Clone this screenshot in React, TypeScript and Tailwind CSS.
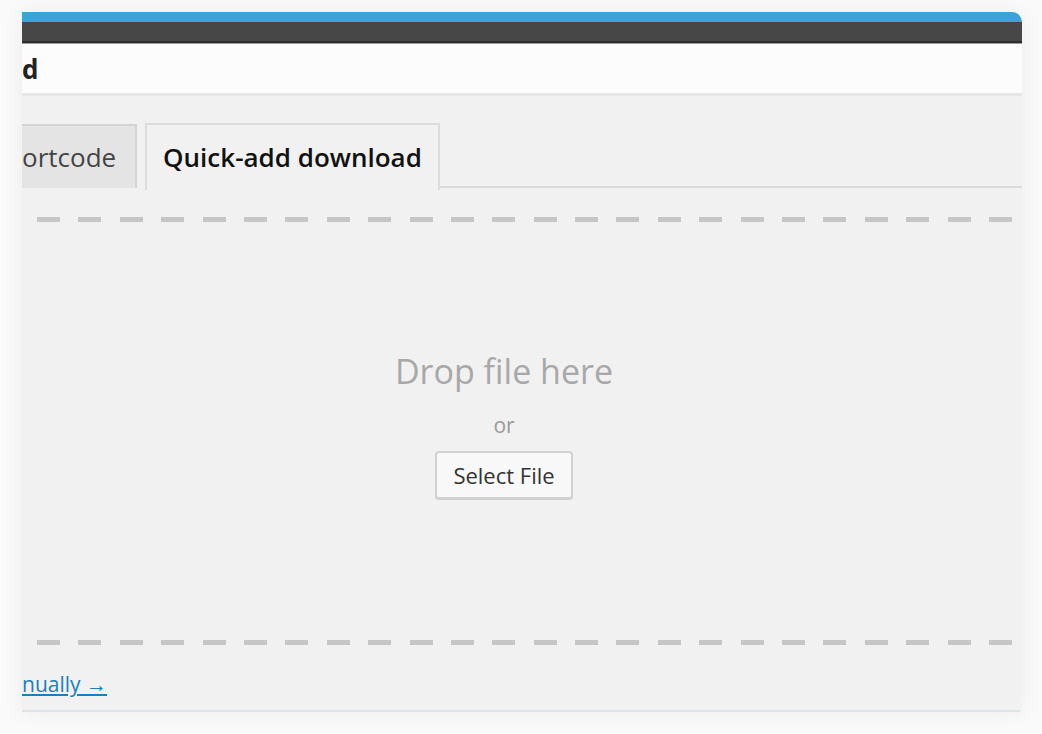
import React from 'react';

// dashed drop-zone edge, 24 short bars
function DashRow() {
  return (
    <div className="flex gap-[18.4px] pl-[15px]">
      {Array.from({ length: 24 }).map((_, i) => (
        <div key={i} className="h-[5px] w-[23px] shrink-0 bg-[#c6c6c6]" />
      ))}
    </div>
  );
}

export default function App() {
  return (
    <div
      className="h-[734px] w-[1042px] overflow-hidden bg-[#fafafa] pt-[12px] pl-[22px]"
      style={{ fontFamily: '"Open Sans", "Liberation Sans", sans-serif' }}
    >
      <div className="flex h-[700px] w-[1000px] flex-col overflow-hidden rounded-tr-[10px] rounded-br-[4px] shadow-[0_0_24px_rgba(0,0,0,0.06)]">
        {/* top bars */}
        <div className="h-[10px] bg-[#3ba4d5]" />
        <div className="h-[19px] bg-[#474747]" />
        <div className="h-[2px] bg-[#2e2e2e]" />
        <div className="h-[1px] bg-[#9a9a9a]" />

        {/* title */}
        <div className="flex h-[52px] items-center border-b-[3px] border-[#e6e6e6] bg-[#fcfcfc]">
          <span className="text-[26px] font-bold leading-none text-[#222]">d</span>
        </div>

        {/* content */}
        <div className="flex flex-1 flex-col bg-[#f1f1f1] border-b-2 border-[#dfe4e7]">
          {/* tabs */}
          <div className="flex items-end pt-[27px]">
            <div className="flex h-[64px] w-[115px] items-center border-t-2 border-r-2 border-[#d4d4d4] bg-[#e4e4e4] text-[26px] text-[#444]">
              ortcode
            </div>
            <div className="ml-[8px] -mb-[2px] flex h-[67px] w-[295px] items-center justify-center border-2 border-b-0 border-[#dcdcdc] bg-[#f1f1f1] text-[26px] font-semibold text-[#111] z-10">
              Quick-add download
            </div>
            <div className="flex-1 border-b-2 border-[#dcdcdc]" />
          </div>

          {/* drop zone */}
          <div className="mt-[29px]">
            <DashRow />
          </div>
          <div className="flex h-[418px] flex-col items-center pt-[132px] pr-[36px]">
            <div className="text-[34px] leading-none text-[#a8a8a8]">Drop file here</div>
            <div className="mt-[27px] text-[21px] leading-none text-[#9a9a9a]">or</div>
            <button className="mt-[15px] h-[48px] w-[138px] rounded-[4px] border-2 border-[#d2d2d2] bg-[#f8f8f8] text-[22px] text-[#333] shadow-[0_1px_0_#ccc]">
              Select File
            </button>
          </div>
          <DashRow />

          <div className="mt-[29px]">
            <a className="text-[21px] leading-none text-[#1a7fbd] underline underline-offset-2">nually →</a>
          </div>
        </div>
      </div>
    </div>
  );
}
